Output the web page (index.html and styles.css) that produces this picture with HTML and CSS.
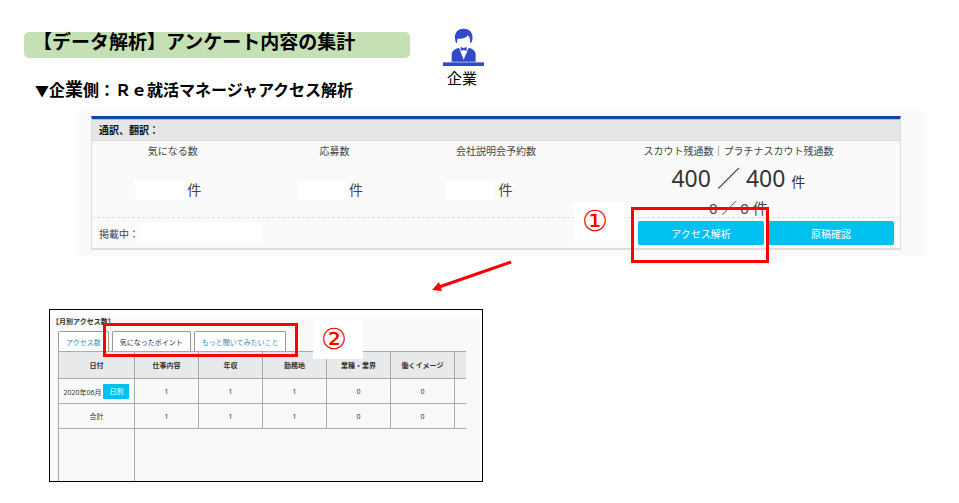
FILE: index.html
```html
<!DOCTYPE html>
<html lang="ja">
<head>
  <meta charset="UTF-8">
  <meta name="viewport" content="width=device-width, initial-scale=1.0">
  <title>【データ解析】アンケート内容の集計</title>
  <link rel="stylesheet" href="styles.css">
</head>
<body>
  <!-- Header -->
  <header>
    <div class="headings">
      <h1>【データ解析】アンケート内容の集計</h1>
      <h2><span class="marker">▼</span>企<span class="large">業</span>側：Ｒｅ就活マネージャアクセス解析</h2>
    </div>
    <div class="company">
      <svg width="41" height="38" viewBox="0 0 123 114" fill="#3349cc" aria-hidden="true">
        <path d="M39 44C30 20 40 2 62 2C84 2 94 20 86 43L81 45C83 34 80 27 75 22C67 31 55 34 44 32C42 36 42 40 43 45Z"/>
        <path d="M26 101V80C26 68 36 63 48 59L62 95L77 59C90 63 98 68 98 80V101Z"/>
        <path d="M53 57L62 60L71 57V69L62 66L53 69Z"/>
        <rect x="0" y="103" width="123" height="11"/>
      </svg>
      <p>企業</p>
    </div>
  </header>

  <!-- Manager summary -->
  <section class="manager">
    <div class="card">
      <h3>通訳、翻訳：</h3>
      <div class="stats">
        <div class="stat">
          <p class="label">気になる数</p>
          <p class="count"><span class="blank"></span>件</p>
        </div>
        <div class="stat">
          <p class="label">応募数</p>
          <p class="count"><span class="blank"></span>件</p>
        </div>
        <div class="stat reserve">
          <p class="label">会社説明会予約数</p>
          <p class="count"><span class="blank"></span>件</p>
        </div>
        <div class="stat scout">
          <p class="label">スカウト残通数｜プラチナスカウト残通数</p>
          <p class="total">400 ／ 400 <small>件</small></p>
          <p class="rest">0 ／ 0 件</p>
        </div>
      </div>
      <div class="card-footer">
        <p>掲載中：<span class="blank"></span></p>
        <div class="actions">
          <button type="button">アクセス解析</button>
          <button type="button">原稿確認</button>
        </div>
      </div>
      <span class="step step-one">①</span>
      <span class="frame frame-one"></span>
    </div>
  </section>

  <svg class="arrow" width="80" height="32" viewBox="0 0 80 32" aria-hidden="true">
    <path d="M79 2L7 27" stroke="#f00" stroke-width="3"/>
    <path d="M0 30L7 22L10 31Z" fill="#f00"/>
  </svg>

  <!-- Monthly access -->
  <section class="monthly">
    <div class="sheet">
      <h3>【月別アクセス数】</h3>
      <div class="tabs">
        <button type="button">アクセス数</button>
        <button type="button" class="active">気になったポイント</button>
        <button type="button">もっと聞いてみたいこと</button>
      </div>
      <table>
        <colgroup>
          <col class="date">
          <col span="5">
          <col class="last">
        </colgroup>
        <thead>
          <tr><th>日付</th><th>仕事内容</th><th>年収</th><th>勤務地</th><th>業種・業界</th><th>働くイメージ</th><th></th></tr>
        </thead>
        <tbody>
          <tr><td>2020年06月 <button type="button">日別</button></td><td>1</td><td>1</td><td>1</td><td>0</td><td>0</td><td></td></tr>
          <tr><td>合計</td><td>1</td><td>1</td><td>1</td><td>0</td><td>0</td><td></td></tr>
          <tr class="empty"><td></td><td colspan="6"></td></tr>
        </tbody>
      </table>
    </div>
    <span class="frame frame-two"></span>
    <span class="step step-two">②</span>
  </section>
</body>
</html>
```

FILE: styles.css
```css
/* Global Styles */
* {
  box-sizing: border-box;
}

body {
  margin: 0;
  padding: 28px 34px 20px 24px;
  font-family: "Noto Sans", "Noto Sans CJK JP", sans-serif;
  background-color: #fff;
  color: #000;
}

h1, h2, h3, p {
  margin: 0;
}

button {
  border: none;
  padding: 0;
  font-family: inherit;
  cursor: pointer;
}

/* Header */
header {
  display: flex;
  gap: 33px;
  height: 83px;
}

.headings {
  flex: 0 1 386px;
  padding-top: 4px;
  white-space: nowrap;
}

h1 {
  height: 26px;
  padding-left: 9px;
  border-radius: 5px;
  background-color: #c5e0b4;
  font-size: 19px;
  line-height: 20px;
}

h2 {
  margin-top: 19px;
  padding-left: 11px;
  font-size: 16px;
  line-height: 24px;
}

.marker {
  font-size: 14px;
}

.large {
  font-size: 18px;
}

.company {
  width: 41px;
  text-align: center;
}

.company svg {
  display: block;
}

.company p {
  padding-right: 3px;
  font-size: 15px;
  line-height: 24px;
}

/* Manager summary */
.manager {
  margin-left: 53px;
  padding: 5px 24px 6px 14px;
  background-color: #fafafa;
}

.card {
  position: relative;
  border: 1px solid #ddd;
  border-top: 3px solid #1048a8;
  border-bottom-width: 2px;
  color: #444;
}

.card h3 {
  padding-left: 7px;
  border-top: 1px solid #a9bfe2;
  border-bottom: 1px solid #ddd;
  background-color: #e6e6e6;
  color: #111;
  font-size: 10px;
  line-height: 20px;
}

.stats {
  display: grid;
  grid-template-columns: 1fr 1fr 1fr 2fr;
  height: 77px;
  border-bottom: 1px dashed #ddd;
  text-align: center;
}

.label {
  font-size: 10px;
  line-height: 20px;
}

.count {
  display: flex;
  justify-content: center;
  align-items: center;
  gap: 3px;
  padding: 17px 9px 0 0;
  font-size: 14px;
  line-height: 24px;
}

.reserve .count {
  padding-right: 33px;
}

.blank {
  width: 49px;
  height: 20px;
  background-color: #fff;
}

.total {
  color: #333;
  font-size: 23px;
  line-height: 34px;
}

.total small {
  font-size: 14px;
}

.rest {
  font-size: 15px;
  line-height: 18px;
}

.card-footer {
  display: flex;
  justify-content: space-between;
  align-items: center;
  padding: 3px 6px 3px 7px;
  font-size: 10px;
}

.card-footer p {
  display: flex;
  align-items: center;
}

.card-footer .blank {
  width: 124px;
}

.actions {
  display: flex;
  gap: 4px;
}

.actions button {
  width: 126px;
  height: 24px;
  border-radius: 2px;
  background-color: #00c0f0;
  color: #fff;
  font-size: 10px;
}

/* Numbered steps and red frames */
.step {
  position: absolute;
  width: 50px;
  height: 39px;
  padding-right: 8px;
  background-color: #fff;
  color: #f00;
  font-family: "DejaVu Sans", sans-serif;
  font-size: 29px;
  line-height: 38px;
  text-align: center;
}

.frame {
  position: absolute;
  border: 3px solid #f00;
}

.step-one {
  right: 276px;
  bottom: 7px;
}

.frame-one {
  right: 131px;
  bottom: -15px;
  width: 138px;
  height: 56px;
}

.arrow {
  display: block;
  margin: 4px 0 17px 408px;
}

/* Monthly access */
.monthly {
  position: relative;
  max-width: 434px;
  margin-left: 25px;
  padding: 7px 2px 0 0;
  border: 1px solid #000;
}

.sheet {
  padding: 0 14px 0 8px;
  background-color: #f9f9f9;
  color: #333;
  font-size: 7px;
}

.sheet h3 {
  margin-left: -6px;
  font-size: 7px;
  line-height: 10px;
}

.tabs {
  display: flex;
  gap: 3px;
  padding-top: 4px;
}

.tabs button {
  height: 20px;
  padding: 0 7px;
  border: 1px solid #999;
  border-bottom: none;
  border-radius: 2px 2px 0 0;
  background-color: #fff;
  color: #2f8fc0;
  font-size: 7px;
}

.tabs .active {
  color: #333;
}

table {
  width: 100%;
  table-layout: fixed;
  border-collapse: collapse;
}

col {
  width: 64px;
}

.date {
  width: 76px;
}

.last {
  width: auto;
}

th, td {
  height: 25px;
  padding: 0;
  border: 1px solid #aaa;
  text-align: center;
  white-space: nowrap;
}

th {
  height: 27px;
  background-color: #e8e9eb;
}

th:last-child, td:last-child {
  border-right: none;
}

td button {
  width: 26px;
  height: 15px;
  border-radius: 1px;
  background-color: #00c0f0;
  color: #fff;
  font-size: 7px;
}

.empty td {
  height: 52px;
  border-bottom: none;
}

.frame-two {
  top: 13px;
  left: 53px;
  width: 195px;
  height: 34px;
}

.step-two {
  top: 10px;
  left: 263px;
}
```
